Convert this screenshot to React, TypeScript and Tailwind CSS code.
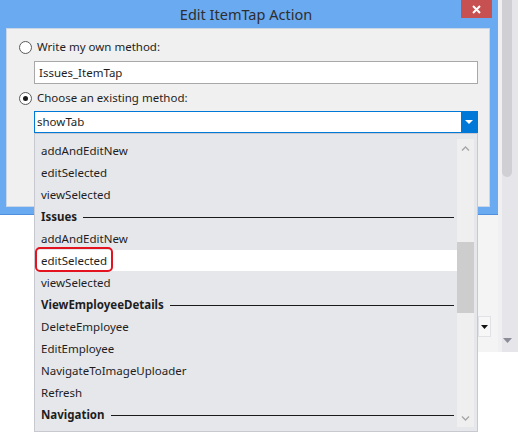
import React from "react";

const font = { fontFamily: '"Noto Sans", "Open Sans", sans-serif' };

type Item = { t: string; h?: boolean; sel?: boolean };

const items: Item[] = [
  { t: "addAndEditNew" },
  { t: "editSelected" },
  { t: "viewSelected" },
  { t: "Issues", h: true },
  { t: "addAndEditNew" },
  { t: "editSelected", sel: true },
  { t: "viewSelected" },
  { t: "ViewEmployeeDetails", h: true },
  { t: "DeleteEmployee" },
  { t: "EditEmployee" },
  { t: "NavigateToImageUploader" },
  { t: "Refresh" },
  { t: "Navigation", h: true },
];

function Radio({ checked }: { checked?: boolean }) {
  return (
    <div className="w-[13px] h-[13px] rounded-full border border-[#5a5a5a] bg-white flex items-center justify-center shrink-0">
      {checked && <div className="w-[5px] h-[5px] rounded-full bg-[#1a1a1a]" />}
    </div>
  );
}

function Row({ it }: { it: Item }) {
  if (it.h) {
    return (
      <div className="h-[22px] flex items-center pl-[6px] pr-[3px]">
        <span className="font-bold text-[11.5px] text-[#1e1e1e] leading-none">{it.t}</span>
        <div className="flex-1 h-[1px] bg-[#1a1a1a] ml-[6px] mt-[1px]" />
      </div>
    );
  }
  return (
    <div className="h-[22px] relative">
      <div className={`h-[21px] flex items-center pl-[6px] ${it.sel ? "bg-white" : ""}`}>
        <span className="text-[11.5px] text-[#1e1e1e] leading-none">{it.t}</span>
      </div>
      {it.sel && (
        <div className="absolute left-0 top-[-3px] w-[78px] h-[25px] border-2 border-[#e3141f] rounded-[5px]" />
      )}
    </div>
  );
}

export default function App() {
  return (
    <div className="relative w-[518px] h-[432px] bg-white overflow-hidden flex" style={font}>
      {/* left column: window + background */}
      <div className="w-[498px] flex flex-col">
        <div className="h-[215px] bg-[#6aaaf0] border-b border-[#4f8fdc] flex flex-col">
          {/* title bar */}
          <div className="h-[28px] flex">
            <div className="flex-1" />
            <div className="flex items-center text-[14.5px] text-[#2e2e2e] pt-[1px]">Edit ItemTap Action</div>
            <div className="flex-1 flex justify-end pr-[6px]">
              <div className="w-[31px] h-[18px] bg-[#c75050] flex items-center justify-center">
                <svg width="9" height="9" viewBox="0 0 9 9">
                  <path d="M1 1 L8 8 M8 1 L1 8" stroke="white" strokeWidth="2" />
                </svg>
              </div>
            </div>
          </div>
          {/* client */}
          <div className="ml-[6px] w-[484px] h-[179px] bg-[#f0f0f0] border border-[#c9d6e6] flex flex-col pl-[12px]">
            <div className="mt-[10px] h-[16px] flex items-center gap-[5px]">
              <Radio />
              <span className="text-[11.5px] text-[#1e1e1e]">Write my own method:</span>
            </div>
            <div className="mt-[6px] ml-[15px] w-[444px] h-[23px] bg-white border border-[#a8a8a8] flex items-center pl-[4px]">
              <span className="text-[11.5px] text-[#1e1e1e]">Issues_ItemTap</span>
            </div>
            <div className="mt-[6px] h-[16px] flex items-center gap-[5px]">
              <Radio checked />
              <span className="text-[11.5px] text-[#1e1e1e]">Choose an existing method:</span>
            </div>
            <div className="mt-[5px] ml-[15px] w-[444px] h-[22px] bg-white border border-[#0078d7] flex">
              <div className="flex-1 flex items-center pl-[2px]">
                <span className="text-[11.5px] text-[#1e1e1e]">showTab</span>
              </div>
              <div className="w-[16px] bg-[#0078d7] flex items-center justify-center">
                <svg width="8" height="4" viewBox="0 0 8 4">
                  <path d="M0 0 L8 0 L4 4 Z" fill="white" />
                </svg>
              </div>
            </div>
          </div>
        </div>
        <div className="flex">
          <div className="flex-1" />
          <div className="w-[21px] h-[137px] bg-[#f4f4f5] flex flex-col">
            <div className="mt-[101px] ml-[1px] w-[13px] h-[21px] border border-[#e2e2e6] bg-[#f7f7f8] flex items-center justify-center">
              <svg width="7" height="4" viewBox="0 0 7 4">
                <path d="M0 0 L7 0 L3.5 4 Z" fill="#111" />
              </svg>
            </div>
          </div>
        </div>
      </div>
      {/* right strip */}
      <div className="w-[20px] flex flex-col">
        <div className="h-[352px] bg-[#e6e6ea] flex flex-col border-l-[4px] border-[#f0f0f2]">
          <div className="w-[10px] h-[177px] bg-[#cfcfd4] rounded-b-[5px]" />
          <div className="flex-1" />
          <div className="h-[14px] flex items-start justify-start pl-[1px]">
            <svg width="9" height="5" viewBox="0 0 9 5">
              <path d="M0 0 L9 0 L4.5 5 Z" fill="#8c8c99" />
            </svg>
          </div>
        </div>
      </div>

      {/* dropdown popup */}
      <div className="absolute left-[34px] top-[133px] w-[444px] h-[299px] bg-[#e6e7eb] border border-[#c8c8d0] flex">
        <div className="flex-1 flex flex-col pt-[6px]">
          {items.map((it, i) => (
            <Row key={i} it={it} />
          ))}
        </div>
        <div className="w-[17px] mr-[3px] mt-[5px] h-[288px] bg-[#efefef] flex flex-col items-center">
          <div className="h-[18px] flex items-center justify-center">
            <svg width="9" height="5" viewBox="0 0 9 5">
              <path d="M1 4.5 L4.5 1 L8 4.5" stroke="#a6a6a6" strokeWidth="1.3" fill="none" />
            </svg>
          </div>
          <div className="h-[85px]" />
          <div className="w-[17px] h-[71px] bg-[#cdcdcd]" />
          <div className="flex-1" />
          <div className="h-[18px] flex items-center justify-center">
            <svg width="9" height="5" viewBox="0 0 9 5">
              <path d="M1 0.5 L4.5 4 L8 0.5" stroke="#a6a6a6" strokeWidth="1.3" fill="none" />
            </svg>
          </div>
        </div>
      </div>
    </div>
  );
}
